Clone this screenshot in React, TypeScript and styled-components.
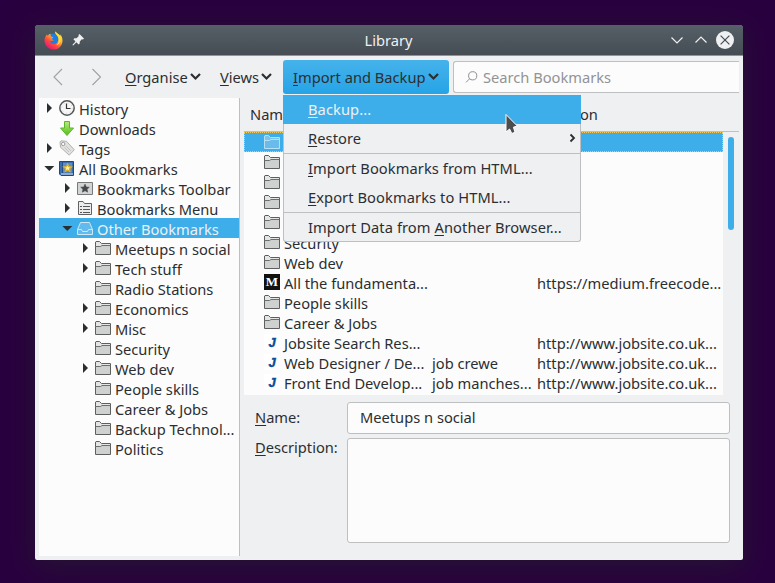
import React from "react";
import styled, { createGlobalStyle, css } from "styled-components";

const Global = createGlobalStyle`
  * { box-sizing: border-box; }
  body { margin: 0; background: #29003f; overflow: hidden; }
  svg { display: block; flex: none; }
`;

const Desktop = styled.div`
  width: 775px;
  height: 583px;
  padding: 25px 32px 23px 35px;
  background: #29003f;
  color: #2b2e31;
  font: 14.667px/20px "Noto Sans", sans-serif;
  white-space: nowrap;
`;

const Window = styled.div`
  width: 708px;
  height: 535px;
  display: flex;
  flex-direction: column;
  background: #eff0f1;
  border-radius: 4px 4px 2px 2px;
  box-shadow: 0 6px 28px 2px rgba(35, 38, 41, 0.5);
`;

const TitleBar = styled.header`
  height: 31px;
  flex: none;
  display: grid;
  grid-template-columns: 63px 1fr 63px;
  align-items: center;
  padding: 0 9px;
  border-radius: 3px 3px 0 0;
  border-bottom: 1px solid #3daee9;
  background: linear-gradient(#566067, #454c54);
  color: #eff0f1;
`;

const TitleGroup = styled.div<{ $gap: number }>`
  display: flex;
  align-items: center;
  gap: ${(p) => p.$gap}px;
`;

const Title = styled.h1`
  margin: 0 1px 0 0;
  font: inherit;
  text-align: center;
`;

const Toolbar = styled.nav`
  height: 42px;
  flex: none;
  display: flex;
  align-items: flex-start;
  padding: 4px 4px 0 18px;
`;

const NavButton = styled.button<{ $width: number }>`
  width: ${(p) => p.$width}px;
  height: 34px;
  padding: 0;
  border: 0;
  background: none;
  display: flex;
  align-items: center;
`;

const MenuButton = styled.button<{ $width: number; $active?: boolean }>`
  position: relative;
  width: ${(p) => p.$width}px;
  height: 34px;
  padding: 0 0 0 10px;
  border: 0;
  border-radius: 3px;
  display: flex;
  align-items: center;
  gap: 2px;
  background: none;
  color: inherit;
  font: inherit;
  ${(p) =>
    p.$active &&
    css`
      background: linear-gradient(#46b2eb, #25a4e6);
    `}
`;

const Key = styled.span`
  text-decoration: underline;
  text-decoration-thickness: 1px;
  text-underline-offset: 2px;
  text-decoration-skip-ink: none;
`;

const Search = styled.div`
  flex: 1;
  height: 32px;
  margin: 1px 0 0 4px;
  padding: 0 0 1px 11px;
  display: flex;
  align-items: center;
  gap: 5px;
  background: #fcfcfc;
  border: 1px solid #bdbfc0;
  border-right: 0;
  border-radius: 3px 0 0 3px;
  color: #929394;
`;

const Menu = styled.div`
  position: absolute;
  z-index: 2;
  left: 0;
  top: 35px;
  width: 298px;
  height: 147px;
  background: #eff0f1;
  border: solid #bdbfc0;
  border-width: 0 1px 1px;
  border-radius: 0 0 3px 3px;
  text-align: left;
  letter-spacing: 0.08px;
`;

const MenuItem = styled.div<{ $active?: boolean }>`
  height: 29px;
  padding: 0 4px 2px 24px;
  display: flex;
  align-items: center;
  justify-content: space-between;
  ${(p) =>
    p.$active &&
    css`
      margin: 0 -1px;
      padding-left: 25px;
      background: #3daee9;
      color: #eff0f1;
    `}
`;

const Separator = styled.div`
  height: 1px;
  background: #bdbfc0;
`;

const Pointer = styled.svg`
  position: absolute;
  left: 221px;
  top: 18px;
`;

const Body = styled.div`
  flex: 1;
  min-height: 0;
  display: flex;
  padding: 0 4px 4px;
`;

const Tree = styled.aside`
  width: 201px;
  flex: none;
  background: #fcfcfc;
  border-right: 1px solid #bdbfc0;
`;

const TreeRow = styled.div<{ $level: number; $selected?: boolean }>`
  height: 20px;
  padding-left: ${(p) => 5 + p.$level * 18}px;
  display: flex;
  align-items: flex-start;
  background: ${(p) => (p.$selected ? "#3daee9" : "none")};
  color: ${(p) => (p.$selected ? "#eff0f1" : "inherit")};
`;

const ArrowSlot = styled.span`
  width: 15px;
  height: 20px;
  flex: none;
`;

const IconSlot = styled.span`
  width: 20px;
  height: 20px;
  padding-top: 3px;
  flex: none;
`;

const Label = styled.span`
  padding-top: 1px;
`;

const Main = styled.main`
  flex: 1;
  min-width: 0;
  padding-left: 4px;
  display: flex;
  flex-direction: column;
`;

const ListHeader = styled.div`
  height: 34px;
  display: grid;
  grid-template-columns: 289px 1fr;
  padding: 6px 0 0 6px;
  border-bottom: 1px solid #bdbfc0;
`;

const ListArea = styled.div`
  height: 263px;
  display: flex;
`;

const List = styled.div`
  width: 479px;
  background: #fcfcfc;
`;

const ListRow = styled.div<{ $selected?: boolean }>`
  height: 20px;
  display: grid;
  grid-template-columns: 20px 148px 105px 1fr;
  padding-left: 20px;
  ${(p) =>
    p.$selected &&
    css`
      background: #3daee9;
      color: #eff0f1;
      outline: 1px dotted #f3c95b;
      outline-offset: -1px;
    `}
`;

const Track = styled.div`
  flex: 1;
  padding: 5px 0 0 5px;
`;

const Thumb = styled.div`
  width: 6px;
  height: 93px;
  border-radius: 3px;
  background: #3daee9;
`;

const Details = styled.form`
  display: grid;
  grid-template-columns: 92px 383px;
  grid-template-rows: 32px 105px;
  row-gap: 4px;
  padding: 7px 0 0 11px;
`;

const FieldLabel = styled.label<{ $shift: number }>`
  margin-top: ${(p) => p.$shift}px;
`;

const Field = styled.div`
  padding: 4px 12px;
  background: #fcfcfc;
  border: 1px solid #bdbfc0;
  border-radius: 3px;
`;

const Firefox = () => (
  <svg width="19" height="19" viewBox="0 0 20 20">
    <defs>
      <linearGradient id="fx" x1="0.85" y1="0.05" x2="0.2" y2="0.95">
        <stop offset="0" stopColor="#fff44f" />
        <stop offset="0.35" stopColor="#ffb52e" />
        <stop offset="0.65" stopColor="#ff4b3a" />
        <stop offset="1" stopColor="#e6127d" />
      </linearGradient>
    </defs>
    <circle cx="9.8" cy="9.8" r="7.2" fill="#1d7de0" />
    <path d="M12 0.5C11 2.5 13.8 4 14.8 6.2C16 9.5 14.4 13.2 10.8 13.6C8 13.8 6.2 12 6.5 10.2C7.6 11 9.6 10.4 10.4 9.4C9 9.2 8.2 8.8 8.6 7.6L10 6.8C9 6 7.6 6 7 5.2L6.8 2.8C5.4 3.2 4.6 4 4 5L3 3.6C1.2 5.8 0.3 8 0.5 10.6C1 16 5 19.5 10 19.5C15.4 19.5 19.4 15.6 19.5 10.2C19.5 7 18.4 5 17 3.4L17.2 5.4C15.8 3 13.4 2.6 12 0.5Z" fill="url(#fx)" />
    <path d="M12 0.5C11 2.5 13.8 4 14.8 6.2C16.4 9.8 15.2 13.4 12.6 15C17 14 18.6 10.4 17.2 5.4C15.8 3 13.4 2.6 12 0.5Z" fill="#ffdf3d" opacity=".85" />
  </svg>
);

const Pin = () => (
  <svg width="12" height="12" viewBox="0 0 12 12" fill="#eff0f1">
    <path d="M7.5 0L12 4.4L11 5.4L9.8 5.2L7.8 7.6L7.7 9.6L6.6 10.5L4.4 8.3L1.2 11.6L0.3 10.9L3.5 7.4L1.4 5.2L2.4 4.3L4.4 4.2L6.7 2.2L6.5 1Z" />
  </svg>
);

type ChevronProps = { d: string; w: number; h: number; color: string; stroke?: number };

const Chevron = ({ d, w, h, color, stroke = 1 }: ChevronProps) => (
  <svg width={w} height={h} viewBox={`0 0 ${w} ${h}`} fill="none" stroke={color} strokeWidth={stroke}>
    <path d={d} />
  </svg>
);

const DropArrow = () => <Chevron d="M1 2L5.5 6.5L10 2" w={11} h={10} color="#2b2e31" stroke={2.2} />;

const Close = () => (
  <svg width="18" height="18" viewBox="0 0 18 18">
    <circle cx="9" cy="9" r="9" fill="#eff0f1" />
    <path d="M4.6 4.6L13.4 13.4M13.4 4.6L4.6 13.4" stroke="#454c54" strokeWidth="1.2" />
  </svg>
);

const Magnifier = () => (
  <svg width="13" height="12" viewBox="0 0 13 12" fill="none" stroke="#8f9091">
    <circle cx="7.7" cy="4.8" r="4.1" />
    <path d="M4.7 7.7L1 11.4" />
  </svg>
);

const Arrow = ({ open }: { open: boolean }) => (
  <svg width="11" height="20" viewBox="0 0 11 20" fill="#2b2e31">
    <path d={open ? "M0.3 8H10.3L5.3 13Z" : "M3 5V15L8 10Z"} />
  </svg>
);

const Folder = ({ light }: { light?: boolean }) => (
  <svg width="16" height="15" viewBox="0 0 16 15">
    <path
      d="M0.5 13.5V1L1 .5H4.5L6.5 2.5H15.5V13.5Z"
      fill={light ? "#79c5ef" : "#e4e5e5"}
      stroke={light ? "#b9dff4" : "#5c5e60"}
    />
    <path d="M1 5H15V13H1Z" fill={light ? "#68bcec" : "#cfd0d0"} />
    <path d="M0.5 5.5H5.5L7 4.5H15.5" fill="none" stroke={light ? "#b9dff4" : "#6c6e70"} />
  </svg>
);

const ClockSvg = styled.svg`
  margin-top: -1px;
`;

const Clock = () => (
  <ClockSvg width="17" height="17" viewBox="0 0 17 17">
    <circle cx="8" cy="8" r="7.2" fill="#f6f6f6" stroke="#55585a" strokeWidth="1.5" />
    <circle cx="8" cy="8" r="5.2" fill="none" stroke="#cfcfcf" strokeDasharray="1 3.08" />
    <path d="M7.5 3.5V8.5H11.5" fill="none" stroke="#333" strokeWidth="1.2" />
  </ClockSvg>
);

const Download = () => (
  <svg width="16" height="16" viewBox="0 0 16 16">
    <defs>
      <linearGradient id="dl" x2="0" y2="1">
        <stop stopColor="#b5ec7b" />
        <stop offset="1" stopColor="#55bd16" />
      </linearGradient>
    </defs>
    <path d="M5.5 .5H10.5V7H14.5L8 14.5L1.5 7H5.5Z" fill="url(#dl)" stroke="#5cb52c" strokeLinejoin="round" />
  </svg>
);

const TagSvg = styled.svg`
  margin-top: -1px;
`;

const Tag = () => (
  <TagSvg width="16" height="16" viewBox="0 0 16 16">
    <path d="M1 2L2 0.8L7.5 1.3L15.3 9.8L10.2 15.2L1.5 7.2Z" fill="#e1e1df" stroke="#b1b1ae" strokeLinejoin="round" />
    <circle cx="4.2" cy="4" r="1.7" fill="#fff" stroke="#9b9b99" />
    <path d="M7 6L12 11M5.5 7.5L10 12" stroke="#c3c3c0" />
  </TagSvg>
);

const starPath = "M0 -5L1.5 -1.7L5 -1.4L2.4 .9L3.1 4.4L0 2.6L-3.1 4.4L-2.4 .9L-5 -1.4L-1.5 -1.7Z";

const Library = () => (
  <svg width="16" height="16" viewBox="0 0 16 16">
    <path d="M.5 .5H14.5V14.5H2L.5 13Z" fill="#3a6fb2" stroke="#21487e" />
    <path d="M4 2H13V11.5H4Z" fill="#5c8fca" />
    <path d="M3.5 .5V12" stroke="#24518e" />
    <path d="M2 13H14" stroke="#dde6ef" />
    <path d={starPath} transform="translate(8.6 7) scale(.78)" fill="#fff3b4" stroke="#e3b01b" strokeWidth="1.5" />
  </svg>
);

const ToolbarIcon = () => (
  <svg width="16" height="15" viewBox="0 0 16 15">
    <path d="M.5 1.5H15.5V13.5H.5Z" fill="#d2d3d3" stroke="#77797a" />
    <path d={starPath} transform="translate(8 7.4) scale(.86)" fill="#45484a" stroke="#45484a" strokeWidth=".6" />
  </svg>
);

const MenuIcon = () => (
  <svg width="16" height="15" viewBox="0 0 16 15">
    <path d="M1.5 13.5V.5H6L7.5 2.5H14.5V13.5Z" fill="#ececec" stroke="#5f6163" />
    <path d="M3 5.5H5M6 5.5H13M3 8.5H5M6 8.5H13M3 11.5H5M6 11.5H13" stroke="#55585a" />
  </svg>
);

const Tray = () => (
  <svg width="16" height="15" viewBox="0 0 16 15" fill="#62baed" stroke="#cfe8f6">
    <path d="M.5 8.5L3.5 1.5H12.5L15.5 8.5V13.5H.5Z" />
    <path d="M.5 8.5H4.5L5.5 10.5H10.5L11.5 8.5H15.5" fill="none" />
  </svg>
);

const SiteGlyph = styled.span`
  display: block;
  width: 16px;
  height: 16px;
  margin-top: -1px;
  text-align: center;
`;

const MediumGlyph = styled(SiteGlyph)`
  background: #111;
  color: #fff;
  font: bold 13px/15px "Liberation Serif", serif;
`;

const JobsiteGlyph = styled(SiteGlyph)`
  background: #fff;
  color: #075099;
  font: italic bold 13px/17px "Liberation Sans", sans-serif;
  -webkit-text-stroke: 0.4px #075099;
`;

type Node = { label: string; level: number; icon: React.ReactNode; arrow?: "open" | "closed"; selected?: boolean };

const sub = (label: string, arrow?: "closed"): Node => ({ label, level: 2, icon: <Folder />, arrow });

const nodes: Node[] = [
  { label: "History", level: 0, icon: <Clock />, arrow: "closed" },
  { label: "Downloads", level: 0, icon: <Download /> },
  { label: "Tags", level: 0, icon: <Tag />, arrow: "closed" },
  { label: "All Bookmarks", level: 0, icon: <Library />, arrow: "open" },
  { label: "Bookmarks Toolbar", level: 1, icon: <ToolbarIcon />, arrow: "closed" },
  { label: "Bookmarks Menu", level: 1, icon: <MenuIcon />, arrow: "closed" },
  { label: "Other Bookmarks", level: 1, icon: <Tray />, arrow: "open", selected: true },
  sub("Meetups n social", "closed"),
  sub("Tech stuff", "closed"),
  sub("Radio Stations"),
  sub("Economics", "closed"),
  sub("Misc", "closed"),
  sub("Security"),
  sub("Web dev", "closed"),
  sub("People skills"),
  sub("Career & Jobs"),
  sub("Backup Technol..."),
  sub("Politics"),
];

type Entry = { name?: string; tags?: string; url?: string; icon?: "medium" | "jobsite" };

const entries: Entry[] = [
  {},
  {},
  {},
  {},
  {},
  { name: "Security" },
  { name: "Web dev" },
  { name: "All the fundamenta...", url: "https://medium.freecode...", icon: "medium" },
  { name: "People skills" },
  { name: "Career & Jobs" },
  { name: "Jobsite Search Res...", url: "http://www.jobsite.co.uk...", icon: "jobsite" },
  { name: "Web Designer / De...", tags: "job crewe", url: "http://www.jobsite.co.uk...", icon: "jobsite" },
  { name: "Front End Develop...", tags: "job manches...", url: "http://www.jobsite.co.uk...", icon: "jobsite" },
];

const EntryIcon = ({ icon, light }: { icon?: Entry["icon"]; light: boolean }) => {
  if (icon === "medium") return <MediumGlyph>M</MediumGlyph>;
  if (icon === "jobsite") return <JobsiteGlyph>J</JobsiteGlyph>;
  return <Folder light={light} />;
};

export default function App() {
  return (
    <Desktop>
      <Global />
      <Window>
        <TitleBar>
          <TitleGroup $gap={9}>
            <Firefox />
            <Pin />
          </TitleGroup>
          <Title>Library</Title>
          <TitleGroup $gap={9}>
            <TitleGroup $gap={12}>
              <Chevron d="M.5 3.5L6 9L11.5 3.5" w={12} h={12} color="#eff0f1" stroke={1.2} />
              <Chevron d="M.5 8.5L6 3L11.5 8.5" w={12} h={12} color="#eff0f1" stroke={1.2} />
            </TitleGroup>
            <Close />
          </TitleGroup>
        </TitleBar>
        <Toolbar>
          <NavButton type="button" $width={38}>
            <Chevron d="M9 1L1 9L9 17" w={11} h={18} color="#a0a2a3" stroke={1.1} />
          </NavButton>
          <NavButton type="button" $width={24}>
            <Chevron d="M1.5 1L9.5 9L1.5 17" w={11} h={18} color="#a0a2a3" stroke={1.1} />
          </NavButton>
          <MenuButton type="button" $width={95}>
            <span><Key>O</Key>rganise</span>
            <DropArrow />
          </MenuButton>
          <MenuButton type="button" $width={73}>
            <span><Key>V</Key>iews</span>
            <DropArrow />
          </MenuButton>
          <MenuButton as="div" $width={166} $active>
            <span><Key>I</Key>mport and Backup</span>
            <DropArrow />
            <Menu>
              <MenuItem $active><span><Key>B</Key>ackup...</span></MenuItem>
              <MenuItem>
                <span><Key>R</Key>estore</span>
                <Chevron d="M1.5 1.5L5 5L1.5 8.5" w={7} h={10} color="#2b2e31" stroke={1.8} />
              </MenuItem>
              <Separator />
              <MenuItem><span><Key>I</Key>mport Bookmarks from HTML...</span></MenuItem>
              <MenuItem><span><Key>E</Key>xport Bookmarks to HTML...</span></MenuItem>
              <Separator />
              <MenuItem><span>Import Data from <Key>A</Key>nother Browser...</span></MenuItem>
              <Pointer width="14" height="22" viewBox="0 0 14 22">
                <path d="M1 1.5V19L4.6 16L6.8 20.5L10 19.2L8.4 14.2L12.3 13Z" fill="#4d4d4d" stroke="#fff" strokeLinejoin="round" />
              </Pointer>
            </Menu>
          </MenuButton>
          <Search>
            <Magnifier />
            <span>Search Bookmarks</span>
          </Search>
        </Toolbar>
        <Body>
          <Tree>
            {nodes.map((n) => (
              <TreeRow key={n.label} $level={n.level} $selected={n.selected}>
                <ArrowSlot>{n.arrow && <Arrow open={n.arrow === "open"} />}</ArrowSlot>
                <IconSlot>{n.icon}</IconSlot>
                <Label>{n.label}</Label>
              </TreeRow>
            ))}
          </Tree>
          <Main>
            <ListHeader>
              <span>Name</span>
              <span>Location</span>
            </ListHeader>
            <ListArea>
              <List>
                {entries.map((e, i) => (
                  <ListRow key={i} $selected={i === 0}>
                    <IconSlot>
                      <EntryIcon icon={e.icon} light={i === 0} />
                    </IconSlot>
                    <Label>{e.name}</Label>
                    <Label>{e.tags}</Label>
                    <Label>{e.url}</Label>
                  </ListRow>
                ))}
              </List>
              <Track>
                <Thumb />
              </Track>
            </ListArea>
            <Details>
              <FieldLabel $shift={5}><Key>N</Key>ame:</FieldLabel>
              <Field>Meetups n social</Field>
              <FieldLabel $shift={-1}><Key>D</Key>escription:</FieldLabel>
              <Field />
            </Details>
          </Main>
        </Body>
      </Window>
    </Desktop>
  );
}
